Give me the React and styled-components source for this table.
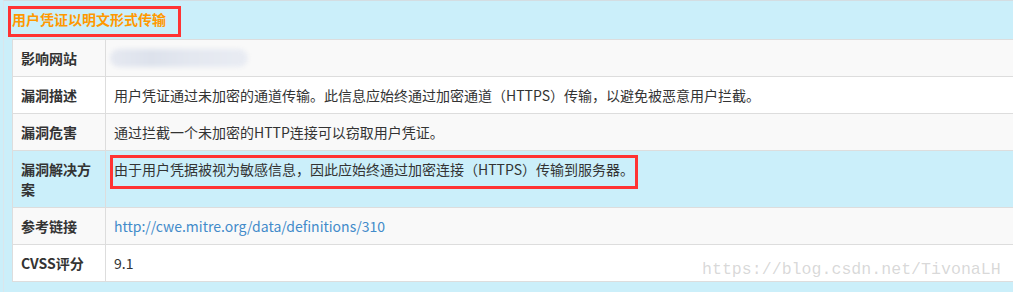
import React from 'react';
import styled, { createGlobalStyle } from 'styled-components';

const GlobalStyle = createGlobalStyle`
    html, body {
        margin: 0;
        padding: 0;
        background: #cbeffa;
        overflow: hidden;
    }
    body {
        font-family: "Noto Sans CJK SC", "Noto Sans", "Liberation Sans", sans-serif;
        font-size: 14px;
        line-height: 20px;
        color: #333;
    }
`;

const Page = styled.div`
    position: relative;
    width: 1013px;
    height: 292px;
    padding-left: 3px;
    box-sizing: border-box;
    overflow: hidden;
`;

const Panel = styled.div`
    height: 100%;
    border-top: 1px solid #d4dde2;
    border-left: 1px solid #dbe6ec;
    background: #cbeffa;
    box-sizing: border-box;
`;

const Header = styled.div`
    padding: 8px 8px 10px;
`;

const Title = styled.span`
    position: relative;
    display: inline-block;
    font-weight: bold;
    color: #f90;
`;

const Annotation = styled.span`
    position: absolute;
    inset: ${(p) => p.$inset};
    border: 3px solid #f33;
    pointer-events: none;
`;

const Table = styled.table`
    margin-left: 8px;
    width: 1040px;
    border-collapse: collapse;
    border-spacing: 0;
`;

const Row = styled.tr`
    background: ${(p) => p.$bg};
`;

const Label = styled.th`
    width: 76px;
    padding: 8px;
    border: 1px solid #ddd;
    text-align: left;
    vertical-align: top;
    font-weight: bold;
    color: #333;
`;

const Cell = styled.td`
    padding: 8px;
    border: 1px solid #ddd;
    vertical-align: top;
`;

const Marked = styled.span`
    position: relative;
    display: inline-block;
`;

const Link = styled.a`
    color: #428bca;
    text-decoration: none;
`;

const Blurred = styled.div`
    width: 138px;
    height: 18px;
    margin: 1px 0 1px -4px;
    border-radius: 9px;
    background: linear-gradient(90deg, #e6e9f1 0%, #dde2ec 30%, #e4e8f0 60%, #e9ecf3 100%);
    filter: blur(2px);
`;

const Watermark = styled.div`
    position: absolute;
    left: 702px;
    top: 260px;
    font-family: "Liberation Mono", "DejaVu Sans Mono", monospace;
    font-size: 16.6px;
    line-height: 20px;
    color: rgba(170, 170, 170, 0.45);
    pointer-events: none;
`;

const rows = [
    { label: '影响网站', value: <Blurred /> },
    {
        label: '漏洞描述',
        value: '用户凭证通过未加密的通道传输。此信息应始终通过加密通道（HTTPS）传输，以避免被恶意用户拦截。',
    },
    { label: '漏洞危害', value: '通过拦截一个未加密的HTTP连接可以窃取用户凭证。' },
    {
        label: '漏洞解决方案',
        info: true,
        value: (
            <Marked>
                由于用户凭据被视为敏感信息，因此应始终通过加密连接（HTTPS）传输到服务器。
                <Annotation $inset="-4px -4px -10px -4px" />
            </Marked>
        ),
    },
    {
        label: '参考链接',
        value: <Link href="#">http://cwe.mitre.org/data/definitions/310</Link>,
    },
    { label: 'CVSS评分', value: '9.1' },
];

const App = () => (
    <>
        <GlobalStyle />
        <Page>
            <Panel>
                <Header>
                    <Title>
                        用户凭证以明文形式传输
                        <Annotation $inset="-3px -15px -8px -4px" />
                    </Title>
                </Header>
                <Table>
                    <tbody>
                        {rows.map((row, i) => (
                            <Row
                                key={row.label}
                                $bg={row.info ? '#cbeffa' : i % 2 === 0 ? '#f9f9f9' : '#fff'}
                            >
                                <Label>{row.label}</Label>
                                <Cell>{row.value}</Cell>
                            </Row>
                        ))}
                    </tbody>
                </Table>
            </Panel>
            <Watermark>https://blog.csdn.net/TivonaLH</Watermark>
        </Page>
    </>
);

export default App;
